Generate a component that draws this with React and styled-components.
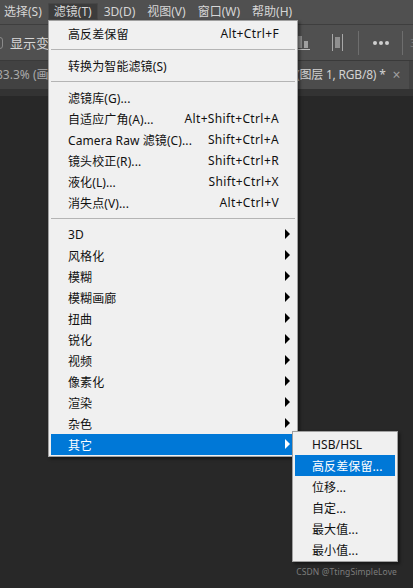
import React from 'react';
import styled, { createGlobalStyle } from 'styled-components';

const GlobalStyle = createGlobalStyle`
  html, body { margin: 0; padding: 0; background: #282828; }
  body { font-family: "Noto Sans", "Noto Sans CJK SC", sans-serif; font-size: 12px; }
`;

const Page = styled.div`
  position: relative;
  width: 413px;
  height: 588px;
  overflow: hidden;
  background: #282828;
`;

const MenuBar = styled.div`
  display: flex;
  height: 24px;
  padding: 3px 0 0 4px;
  box-sizing: border-box;
  background: #505050;
  color: #d6d6d6;
`;

const BarItem = styled.div`
  height: 17px;
  line-height: 18px;
  padding: 0 ${p => (p.$active ? 6 : 0)}px;
  margin-right: ${p => p.$gap || 12}px;
  border-radius: 2px;
  white-space: nowrap;
  ${p => p.$active && 'background: #3c3c3c; box-shadow: inset 0 0 0 1px #474747;'}
`;

const OptionsBar = styled.div`
  display: flex;
  align-items: center;
  height: 37px;
  box-sizing: border-box;
  background: #505050;
  border-top: 1px solid #3e3e3e;
  border-bottom: 1px solid #3a3a3a;
  color: #d6d6d6;
`;

const CheckBox = styled.span`
  flex: none;
  width: 12px;
  height: 12px;
  margin-left: -9px;
  border: 1px solid #8a8a8a;
  border-radius: 3px;
  box-sizing: border-box;
`;

const OptionsLabel = styled.span`
  flex: none;
  width: 38px;
  margin-left: 7px;
  overflow: hidden;
  font-size: 13px;
  white-space: nowrap;
`;

const OptionsRight = styled.div`
  display: flex;
  align-items: center;
  margin-left: 249px;
  flex: none;
`;

const ToolDivider = styled.div`
  flex: none;
  width: 1px;
  height: 24px;
  margin: 0 ${p => p.$right}px 0 ${p => p.$left}px;
  background: #6e6e6e;
`;

const Histogram = styled.svg`
  flex: none;
  margin: 0 22px 0 0;
`;

const ClippedDigit = styled.span`
  flex: none;
  color: #777;
  font-size: 11px;
`;

const TabBar = styled.div`
  display: flex;
  height: 28px;
  box-sizing: border-box;
  background: #424242;
  color: #aaa;
  line-height: 28px;
  white-space: nowrap;
`;

const TabLeft = styled.div`
  width: 48px;
  overflow: hidden;
  text-indent: -4px;
`;

const TabRight = styled.div`
  display: flex;
  align-items: center;
  margin: 0 4px 0 auto;
  width: 117px;
  padding-left: 4px;
  box-sizing: border-box;
  background: #4c4c4c;
  color: #d2d2d2;
  letter-spacing: -0.2px;
`;

const TabClose = styled.span`
  margin-left: 7px;
  color: #a0a0a0;
  font-size: 14px;
`;

const CanvasEdge = styled.div`
  height: 7px;
  background: #333;
`;

const Menu = styled.div`
  position: absolute;
  box-sizing: border-box;
  background: #f0f0f0;
  border: 1px solid #a0a0a0;
  box-shadow: 2px 2px 3px rgba(0, 0, 0, 0.45);
  color: #111;
  padding: 2px;
`;

const MainMenu = styled(Menu)`
  left: 48px;
  top: 20px;
  width: 250px;
  height: 437px;
`;

const SubMenu = styled(Menu)`
  left: 292px;
  top: 431px;
  width: 106px;
  height: 131px;
`;

const Row = styled.div`
  display: flex;
  align-items: center;
  position: relative;
  height: 21px;
  padding-left: 17px;
  background: ${p => (p.$on ? '#0078d7' : 'transparent')};
  color: ${p => (p.$on ? '#fff' : '#111')};
  letter-spacing: 0.1px;
  white-space: nowrap;
`;

const Shortcut = styled.span`
  margin-left: auto;
  margin-right: 16px;
  letter-spacing: 0.35px;
`;

const Arrow = styled.span`
  position: absolute;
  right: 5px;
  top: 5px;
  width: 0;
  height: 0;
  border-left: 5px solid ${p => (p.$on ? '#fff' : '#000')};
  border-top: 5px solid transparent;
  border-bottom: 5px solid transparent;
`;

const Separator = styled.div`
  height: 1px;
  margin: 5px 0;
  background: #b4b4b4;
`;

const Watermark = styled.div`
  position: absolute;
  right: 16px;
  top: 566px;
  font-size: 8.5px;
  letter-spacing: 0.1px;
  color: #7d7d7d;
`;

const HistogramIcon = () => (
  <Histogram width="13" height="14" viewBox="0 0 13 14" fill="none">
    <rect x="0" y="0" width="5" height="12" fill="#8c8c8c" />
    <rect x="7" y="5" width="4" height="7" fill="#a0a0a0" />
    <rect x="0" y="13" width="13" height="1" fill="#bdbdbd" />
  </Histogram>
);

const DistributeIcon = () => (
  <svg width="11" height="17" viewBox="0 0 11 17" fill="none">
    <rect x="0" y="0" width="1" height="17" fill="#a8a8a8" />
    <rect x="3" y="3" width="5" height="11" fill="#8f8f8f" />
    <rect x="10" y="0" width="1" height="17" fill="#a8a8a8" />
  </svg>
);

const DotsIcon = () => (
  <svg width="16" height="4" viewBox="0 0 16 4" fill="#cfcfcf">
    <circle cx="2" cy="2" r="2" />
    <circle cx="8" cy="2" r="2" />
    <circle cx="14" cy="2" r="2" />
  </svg>
);

const topItems = [
  ['滤镜库(G)...', ''],
  ['自适应广角(A)...', 'Alt+Shift+Ctrl+A'],
  ['Camera Raw 滤镜(C)...', 'Shift+Ctrl+A'],
  ['镜头校正(R)...', 'Shift+Ctrl+R'],
  ['液化(L)...', 'Shift+Ctrl+X'],
  ['消失点(V)...', 'Alt+Ctrl+V'],
];

const groups = ['3D', '风格化', '模糊', '模糊画廊', '扭曲', '锐化', '视频', '像素化', '渲染', '杂色', '其它'];
const subItems = ['HSB/HSL', '高反差保留...', '位移...', '自定...', '最大值...', '最小值...'];

export default function App() {
  return (
    <Page>
      <GlobalStyle />
      <MenuBar>
        <BarItem $gap={6}>选择(S)</BarItem>
        <BarItem $gap={6} $active>滤镜(T)</BarItem>
        <BarItem>3D(D)</BarItem>
        <BarItem>视图(V)</BarItem>
        <BarItem>窗口(W)</BarItem>
        <BarItem>帮助(H)</BarItem>
      </MenuBar>
      <OptionsBar>
        <CheckBox />
        <OptionsLabel>显示变换</OptionsLabel>
        <OptionsRight>
          <HistogramIcon />
          <DistributeIcon />
          <ToolDivider $left={15} $right={14} />
          <DotsIcon />
          <ToolDivider $left={13} $right={7} />
          <ClippedDigit>3</ClippedDigit>
        </OptionsRight>
      </OptionsBar>
      <TabBar>
        <TabLeft>83.3% (画布</TabLeft>
        <TabRight>
          (图层 1, RGB/8) *
          <TabClose>×</TabClose>
        </TabRight>
      </TabBar>
      <CanvasEdge />

      <MainMenu>
        <Row>
          高反差保留
          <Shortcut>Alt+Ctrl+F</Shortcut>
        </Row>
        <Separator />
        <Row>转换为智能滤镜(S)</Row>
        <Separator />
        {topItems.map(([label, keys]) => (
          <Row key={label}>
            {label}
            {keys && <Shortcut>{keys}</Shortcut>}
          </Row>
        ))}
        <Separator />
        {groups.map(name => (
          <Row key={name} $on={name === '其它'}>
            {name}
            <Arrow $on={name === '其它'} />
          </Row>
        ))}
      </MainMenu>

      <SubMenu>
        {subItems.map((name, i) => (
          <Row key={name} $on={i === 1}>
            {name}
          </Row>
        ))}
      </SubMenu>

      <Watermark>CSDN @TtingSimpleLove</Watermark>
    </Page>
  );
}
